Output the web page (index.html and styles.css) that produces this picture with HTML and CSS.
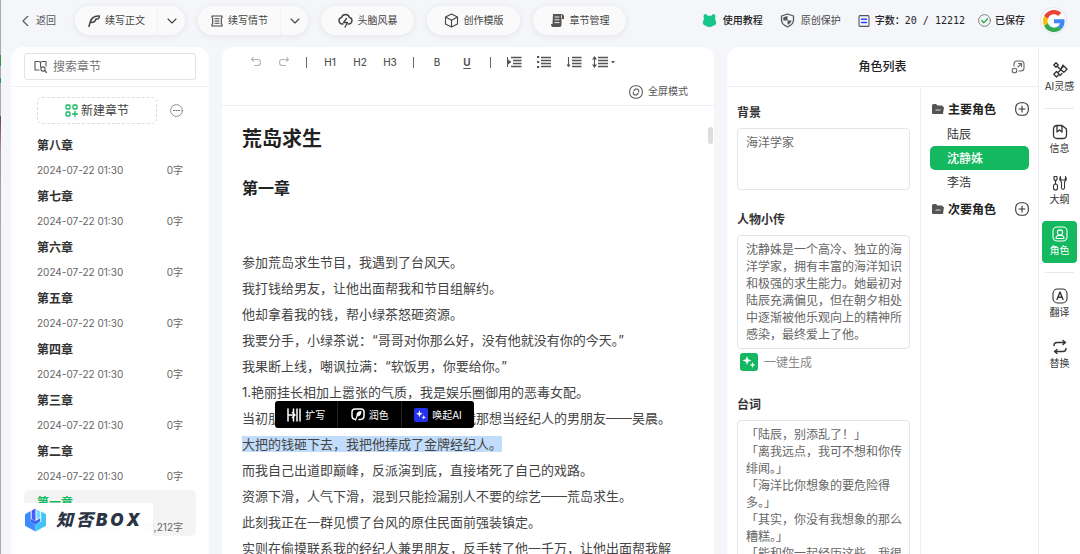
FILE: index.html
```html
<!DOCTYPE html>
<html lang="zh-CN">
<head>
<meta charset="utf-8">
<meta name="viewport" content="width=device-width, initial-scale=1">
<title>荒岛求生 - 写作</title>
<link rel="stylesheet" href="styles.css">
</head>
<body>
<svg class="defs" aria-hidden="true">
  <symbol id="chev" viewBox="0 0 10 10"><path d="M1 3l4 4 4-4"/></symbol>
  <symbol id="plus" viewBox="0 0 14 14"><rect x=".7" y=".7" width="12.6" height="12.6" rx="5"/><path d="M7 4v6M4 7h6"/></symbol>
  <symbol id="folder" viewBox="0 0 12 12"><path d="M0 2.5Q0 1 1.500 1H4l1.500 1.500H10Q11 2.500 11 4h1l-1 7H1Q0 11 0 10z" fill="#555" stroke="none"/><path d="M4 7h4" stroke="#ddd"/></symbol>
  <symbol id="spark" viewBox="0 0 18 18"><path d="M7 3l1.200 3.300L11.500 7.500 8.200 8.700 7 12 5.800 8.700 2.500 7.500 5.800 6.300zM12.500 9l.8 2.200 2.200.8-2.200.8-.8 2.200-.8-2.200-2.200-.8 2.200-.8z" fill="#fff" stroke="none"/></symbol>
</svg>
<div class="edge"></div>
<div class="app">
  <header class="topbar">
    <button class="back"><svg class="i10" viewBox="0 0 10 10"><path d="M7 0L2 5l5 5"/></svg>返回</button>
    <div class="actions">
      <div class="split">
        <button class="pill-main"><svg class="i12" viewBox="0 0 12 12"><path d="M1 11.500C2 7 3 2.500 7 1.500Q9 .8 11.500 1 11.500 3 10 4H8Q7 7.500 3.500 7.500" stroke-width="1.500"/></svg>续写正文</button>
        <button class="pill-drop" aria-label="更多续写正文"><svg class="i10"><use href="#chev"/></svg></button>
      </div>
      <div class="split">
        <button class="pill-main"><svg class="i12" viewBox="0 0 12 12"><path d="M1 1h10v1.500l-.7.8v5.400l.7.8V11H1V9.500l.7-.8V3.300L1 2.500zM4 3.800h4M4 6h4M4 8.200h4"/></svg>续写情节</button>
        <button class="pill-drop" aria-label="更多续写情节"><svg class="i10"><use href="#chev"/></svg></button>
      </div>
      <button class="pill"><svg class="i15" viewBox="0 0 15 15"><path d="M5 11H4Q1 10.500 1 7.500 1 5 3.500 4.500 4.500 1.500 7.500 1.500T11.500 4.500Q14 5 14 7.500 14 10.500 11 11h-1" stroke-width="1.400"/><path d="M8.500 5.500L5.500 9.500h4L7 14" stroke-width="1.300"/></svg>头脑风暴</button>
      <button class="pill"><svg class="i15" viewBox="0 0 15 15"><path d="M7.500 1L13.500 4v7l-6 3-6-3V4zM1.500 4l6 3.200L13.500 4M7.500 7.200V14"/></svg>创作模版</button>
      <button class="pill"><svg class="i15" viewBox="0 0 15 15"><path d="M3 1h8Q14 1 14 3.500V6h-2.500v6Q11.500 14 9.500 14H3Q1 14 1 11h1.500z" fill="#555" stroke="none"/><path d="M5 4h4M5 6.800h4M5 9.600h4" stroke="#fff" stroke-width=".9"/><path d="M11.500 2.500V5" stroke="#fff" stroke-width=".8"/></svg>章节管理</button>
    </div>
    <div class="status">
      <a class="stat strong" href="#"><svg class="i15" viewBox="0 0 15 15"><path d="M3.300 1Q5 1 5.500 2.700h4Q10 1 11.700 1T13.500 3.500L13 6l1 2.500Q15 12 11 12.800 10 14 7.500 14T4 12.800Q0 12 1 8.500L2 6 1.500 3.500Q1.500 1 3.300 1z" fill="#17c58b" stroke="none"/></svg>使用教程</a>
      <a class="stat" href="#"><svg class="i15" viewBox="0 0 15 15"><path d="M7.500 1L13.500 3v4q0 4.500-6 7-6-2.500-6-7V3z" stroke-width="1.300"/><path d="M7.500 3v4.500h4.300q-.6 2.700-4.300 4.500V7.500H3.300V4.200z" fill="#555" stroke="none"/></svg>原创保护</a>
      <span class="stat strong count"><svg class="i12" viewBox="0 0 12 12"><rect x="1" y=".6" width="10" height="10.800" rx="1"/><path d="M3.500 4.300h5M3.500 7.500h5" stroke="#2a49f5" stroke-width="1.500"/></svg>字数：20 / 12212</span>
      <span class="stat strong saved"><svg class="i13" viewBox="0 0 13 13"><circle cx="6.500" cy="6.500" r="5.900" stroke="#777" stroke-width=".9"/><path d="M3.700 6.500l2.100 2.200 3.700-4" stroke="#2fae4c" stroke-width="1.400"/></svg>已保存</span>
      <a class="avatar" href="#" aria-label="账户"><svg viewBox="0 0 48 48"><path fill="#EA4335" d="M24 9.500c3.540 0 6.710 1.220 9.210 3.600l6.850-6.850C35.900 2.380 30.470 0 24 0 14.620 0 6.510 5.380 2.560 13.220l7.980 6.190C12.430 13.720 17.740 9.500 24 9.500z"/><path fill="#4285F4" d="M46.980 24.550c0-1.570-.15-3.090-.38-4.550H24v9.020h12.940c-.58 2.960-2.260 5.480-4.780 7.180l7.730 6c4.510-4.180 7.090-10.360 7.090-17.650z"/><path fill="#FBBC05" d="M10.530 28.590A14.500 14.500 0 0 1 10.530 19.410l-7.980-6.190A24 24 0 0 0 2.560 34.780z"/><path fill="#34A853" d="M24 48c6.480 0 11.930-2.130 15.890-5.810l-7.730-6c-2.150 1.450-4.920 2.300-8.160 2.300-6.260 0-11.570-4.220-13.470-9.910l-7.980 6.190C6.510 42.620 14.620 48 24 48z"/></svg></a>
    </div>
  </header>

  <main class="columns">
    <aside class="panel chapters">
      <div class="search-row">
        <label class="search"><svg class="i13" viewBox="0 0 13 13"><path d="M5 10H1V1.500h3.500Q6.500 1.500 6.500 3q0-1.500 2-1.500H12V6M6.500 3v4"/><circle cx="9" cy="9" r="2.100"/><path d="M10.500 10.500L12.500 12.500"/></svg><input type="text" placeholder="搜索章节" aria-label="搜索章节"></label>
      </div>
      <div class="new-row">
        <button class="new"><svg class="i13" viewBox="0 0 13 13"><rect x="1" y="1" width="4" height="4" rx="1"/><rect x="8" y="1" width="4" height="4" rx="1"/><rect x="1" y="8" width="4" height="4" rx="1"/><path d="M10 7.500v5M7.500 10h5"/></svg>新建章节</button>
        <button class="more" aria-label="更多"><svg class="i13" viewBox="0 0 13 13"><circle cx="6.500" cy="6.500" r="5.900" stroke-width=".8"/><path d="M3.500 6.500h1.200M6 6.500h1.200M8.500 6.500h1.200"/></svg></button>
      </div>
      <ul class="list">
        <li><h3>第八章</h3><p><span>2024-07-22 01:30</span><span>0字</span></p></li>
        <li><h3>第七章</h3><p><span>2024-07-22 01:30</span><span>0字</span></p></li>
        <li><h3>第六章</h3><p><span>2024-07-22 01:30</span><span>0字</span></p></li>
        <li><h3>第五章</h3><p><span>2024-07-22 01:30</span><span>0字</span></p></li>
        <li><h3>第四章</h3><p><span>2024-07-22 01:30</span><span>0字</span></p></li>
        <li><h3>第三章</h3><p><span>2024-07-22 01:30</span><span>0字</span></p></li>
        <li><h3>第二章</h3><p><span>2024-07-22 01:30</span><span>0字</span></p></li>
        <li class="current"><h3>第一章</h3><p><span>2024-07-22 01:31</span><span>12,212字</span></p>
          <div class="brand"><svg viewBox="0 0 22 24"><path d="M0 6l6-3.500V14l5 3v7L0 18z" fill="#3d8bff"/><path d="M7 2l4-2v13l-4-2z" fill="#4a5cf5"/><path d="M11 24v-7l6-3.500V3l5 3v12z" fill="#41c4fa"/><path d="M11 13l5-3v3.500L11 17l-5-3v-3z" fill="#3468f5"/><path d="M12 1l4 2v6l-4 2.500z" fill="#6fdcff"/></svg><b>知</b><b>否</b><b>B</b><b>O</b><b>X</b></div>
        </li>
      </ul>
    </aside>

    <section class="panel editor">
      <div class="tools">
        <div class="toolbar">
          <button class="faint" aria-label="撤销"><svg class="i12" viewBox="0 0 12 12"><path d="M3.500 1L1.500 3.500l2.500 2M1.500 3.500H8Q10.500 3.500 10.500 6.500T8 9.500H4"/></svg></button>
          <button class="faint" aria-label="重做"><svg class="i12" viewBox="0 0 12 12"><path d="M8.500 1l2 2.500-2.500 2M10.500 3.500H4Q1.500 3.500 1.500 6.500T4 9.500h4"/></svg></button>
          <i></i>
          <button>H1</button><button>H2</button><button>H3</button>
          <i></i>
          <button>B</button><button class="under">U</button>
          <i></i>
          <button aria-label="缩进"><svg class="i16" viewBox="0 0 16 16"><path d="M1.500 3v10" stroke-width="1"/><path d="M5 3.500h10.500M7 6.500h8.500M7 9.500h8.500M5 12.500h10.500" stroke-width="1.700"/><path d="M2 5.500L5.500 8 2 10.500z" fill="#555" stroke="none"/></svg></button>
          <button aria-label="列表"><svg class="i16" viewBox="0 0 16 16"><path d="M1 3h2.200M1 8h2.200M1 13h2.200" stroke-width="2.200"/><path d="M5 3.500h10M5 6.500h10M5 9.500h10M5 12.500h10" stroke-width="1.500"/></svg></button>
          <button aria-label="降序"><svg class="i16" viewBox="0 0 16 16"><path d="M2.500 3v9M1 10.500l1.500 2 1.500-2"/><path d="M6 3.500h9.500M6 6.500h9.500M6 9.500h9.500M6 12.500h9.500" stroke-width="1.600"/></svg></button>
          <button class="wide" aria-label="行距"><svg class="i16" viewBox="0 0 16 16"><path d="M2.500 3v10"/><path d="M0 5.500L2.500 2 5 5.500zM0 10.500L2.500 14 5 10.500z" fill="#555" stroke="none"/><path d="M6 3.500h10M6 6.500h10M6 9.500h10M6 12.500h10" stroke-width="1.700"/></svg><svg class="caret" viewBox="0 0 6 6"><path d="M1 2h4L3 4.500z" fill="#555" stroke="none"/></svg></button>
        </div>
        <button class="full"><svg class="i14" viewBox="0 0 14 14"><rect x=".7" y=".7" width="12.600" height="12.600" rx="5.500"/><path d="M7 4Q9.800 3.500 9.800 7M7 10Q4.200 10.500 4.200 7M5 5.500L6.500 4M9 8.500L7.500 10"/></svg>全屏模式</button>
      </div>
      <div class="thumb"></div>
      <article class="doc">
        <h1>荒岛求生</h1>
        <h2>第一章</h2>
        <p>参加荒岛求生节目，我遇到了台风天。</p>
        <p>我打钱给男友，让他出面帮我和节目组解约。</p>
        <p>他却拿着我的钱，帮小绿茶怒砸资源。</p>
        <p>我要分手，小绿茶说：“哥哥对你那么好，没有他就没有你的今天。”</p>
        <p>我果断上线，嘲讽拉满：“软饭男，你要给你。”</p>
        <p>1.艳丽挂长相加上嚣张的气质，我是娱乐圈御用的恶毒女配。</p>
        <p>当初朋友劝我签下新人练手，我签下了我那想当经纪人的男朋友——吴晨。</p>
        <p class="sel"><mark>大把的钱砸下去，我把他捧成了金牌经纪人。</mark>
          <span class="popup"><button><svg class="i14" viewBox="0 0 14 14"><path d="M1 1v12M10 1v12M13 1v12M6.500 1v4M6.500 9v4M1 7h7M5.500 4.500L8 7 5.500 9.500" stroke-width="1.500"/></svg>扩写</button><button><svg class="i14" viewBox="0 0 14 14"><path d="M4.500 11.500Q1 11 1 8V4Q1 1 4 1h6q3 0 3 3v4q0 3-3.500 3.500H8" stroke-width="1.500"/><path d="M10 3.500Q5.500 4 6 8q3.500 0 4-4.500zM6 8L4.500 12" fill="#fff"/></svg>润色</button><button><svg class="i14 ai"><use href="#spark"/></svg>唤起AI</button></span>
        </p>
        <p>而我自己出道即巅峰，反派演到底，直接堵死了自己的戏路。</p>
        <p>资源下滑，人气下滑，混到只能捡漏别人不要的综艺——荒岛求生。</p>
        <p>此刻我正在一群见惯了台风的原住民面前强装镇定。</p>
        <p>实则在偷摸联系我的经纪人兼男朋友，反手转了他一千万，让他出面帮我解</p>
      </article>
    </section>

    <section class="panel roles">
      <div class="role-main">
        <div class="role-head"><h2>角色列表</h2><button aria-label="展开"><svg class="i14" viewBox="0 0 14 14"><path d="M3 6V4Q3 1 6 1h4q3 0 3 3v4q0 3-3 3H8M7 7l3.500-3.500M7.500 3.500h3v3"/><circle cx="3.500" cy="10.500" r="2.300"/></svg></button></div>
        <div class="role-body">
          <form class="form">
            <label for="bg">背景</label>
            <textarea id="bg" class="t-bg">海洋学家</textarea>
            <label for="bio">人物小传</label>
            <textarea id="bio" class="t-bio">沈静姝是一个高冷、独立的海洋学家，拥有丰富的海洋知识和极强的求生能力。她最初对陆辰充满偏见，但在朝夕相处中逐渐被他乐观向上的精神所感染，最终爱上了他。</textarea>
            <button type="button" class="gen"><svg><use href="#spark"/></svg>一键生成</button>
            <label for="lines">台词</label>
            <textarea id="lines" class="t-lines">「陆辰，别添乱了！」
「离我远点，我可不想和你传绯闻。」
「海洋比你想象的要危险得多。」
「其实，你没有我想象的那么糟糕。」
「能和你一起经历这些，我很</textarea>
          </form>
          <div class="cast">
            <div class="group"><svg class="i12"><use href="#folder"/></svg><h3>主要角色</h3><button aria-label="添加主要角色"><svg class="i14"><use href="#plus"/></svg></button></div>
            <button class="person">陆辰</button>
            <button class="person on">沈静姝</button>
            <button class="person">李浩</button>
            <div class="group"><svg class="i12"><use href="#folder"/></svg><h3>次要角色</h3><button aria-label="添加次要角色"><svg class="i14"><use href="#plus"/></svg></button></div>
          </div>
        </div>
      </div>
      <nav class="rail">
        <button><svg class="i16" viewBox="0 0 16 16"><path d="M4 .8L6.200 3 4 5.200 1.800 3zM11.800 4L15 7.200l-3.200 3.200-3.200-3.200zM4.500 9.500L7.200 12.200 4.500 15 1.800 12.200zM5.500 4.500l4 4M9.500 5.500L11 3M6 10.500l2.500-2.500M8 13.500l2-2" stroke-width="1.300"/></svg>AI灵感</button>
        <hr>
        <button><svg class="i16" viewBox="0 0 16 16"><path d="M5 1.500h5L14.500 5v6q0 3.500-3.500 3.500H5Q1.500 14.500 1.500 11V5Q1.500 1.500 5 1.500zM5 2v6l2.500-2L10 8V2" stroke-width="1.300"/></svg>信息</button>
        <button><svg class="i16" viewBox="0 0 16 16"><path d="M2 1.500h3v3L3.500 6v3M2 1.500v3L3.500 6"/><rect x="1.500" y="9" width="4" height="6" rx="2"/><path d="M8.500 1.500Q6.500 5 9.500 7v6q1.500 3 3 0V7q3-2 1-5.500V4l-1 1h-3l-1-1z"/></svg>大纲</button>
        <button class="on"><svg class="i16" viewBox="0 0 16 16"><rect x="1" y="1" width="14" height="14" rx="4"/><circle cx="8" cy="6.500" r="2.600"/><path d="M4 12.500Q4 9.300 8 9.300t4 3.200z"/></svg>角色</button>
        <hr>
        <button><svg class="i16" viewBox="0 0 16 16"><rect x="1" y="1" width="14" height="14" rx="4.500"/><path d="M5 11.500L8 4l3 7.500M6 9.200h4" stroke-width="1.400"/></svg>翻译</button>
        <button><svg class="i16" viewBox="0 0 16 16"><path d="M2 6.500Q2 3.500 5 3.500h8M11 1.500l2.500 2L11 5.500M14 9.500q0 3-3 3H3M5 10.500l-2.500 2L5 14.500" stroke-width="1.400"/></svg>替换</button>
      </nav>
    </section>
  </main>
</div>
</body>
</html>
```
FILE: styles.css
```css
* { box-sizing: border-box; margin: 0; padding: 0; }
body {
  height: 100vh; overflow: hidden; display: flex;
  background: #f5f6fa; color: #333;
  font: 12px/17px Inter, "Noto Sans CJK SC", sans-serif;
}
button, input, textarea { font: inherit; color: inherit; border: 0; background: none; outline: 0; }
button { display: flex; align-items: center; white-space: nowrap; }
a { color: inherit; text-decoration: none; }
ul { list-style: none; }
svg { flex: none; fill: none; stroke: currentColor; stroke-width: 1.1; stroke-linecap: round; stroke-linejoin: round; }
.defs { position: absolute; width: 0; height: 0; }
.i10 { width: 10px; height: 10px; }
.i12 { width: 12px; height: 12px; }
.i13 { width: 13px; height: 13px; }
.i14 { width: 14px; height: 14px; }
.i15 { width: 15px; height: 15px; }
.i16 { width: 16px; height: 16px; }

.edge {
  width: 1px;
  background: linear-gradient(#aaa 10%, #2f9350 10%, #2f9350 12%, #aaa 12%, #aaa 14%, #2f9350 14%, #2f9350 15%, #aaa 15%, #aaa 21%, #70424c 21%, #a98f94 27%, #aaa 40%, #aaa);
}
.app { flex: 1; min-width: 0; display: flex; flex-direction: column; }

.topbar { height: 47px; flex: none; display: flex; align-items: flex-start; padding: 6px 13px 0 20px; font-size: 10px; color: #444; }
.back { height: 29px; gap: 5px; color: #555; width: 54px; }
.actions { display: flex; gap: 13px; }
.split, .pill { height: 29px; border-radius: 15px; background: #fafafa; box-shadow: 0 1px 7px #00000014; }
.split { display: flex; width: 110px; }
.pill-main { flex: 1; gap: 5px; padding-left: 13px; }
.pill-drop { width: 28px; justify-content: center; border-left: 1px solid #f1f1f3; }
.pill { width: 93px; justify-content: center; gap: 5px; }
.status { margin-left: auto; display: flex; align-items: center; height: 29px; }
.stat { display: flex; align-items: center; gap: 6px; margin-right: 17px; white-space: nowrap; }
.stat svg { color: #555; }
.strong { color: #222; font-weight: 500; }
.count { font-family: "DejaVu Sans Mono", "Noto Sans CJK SC", monospace; gap: 5px; margin-right: 13px; }
.saved { gap: 4px; margin-right: 15px; }
.avatar { width: 27px; height: 27px; border: 1px solid #e4e5ea; border-radius: 50%; display: grid; place-items: center; background: #f9fafc; }
.avatar svg { width: 22px; height: 22px; stroke: none; }

.columns { flex: 1; min-height: 0; display: flex; gap: 13px; padding-left: 10px; }
.panel { background: #fff; border-radius: 12px 12px 0 0; overflow: hidden; }

.chapters { width: 198px; flex: none; }
.search-row { padding: 6px 13px; border-bottom: 1px solid #efeff2; }
.search { display: flex; align-items: center; gap: 6px; height: 27px; padding: 0 9px; border: 1px solid #e2e3e8; border-radius: 3px; color: #555; }
.search input { flex: 1; min-width: 0; }
.search input::placeholder { color: #757575; opacity: 1; }
.new-row { display: flex; align-items: center; justify-content: space-between; padding: 10px 26px 0; }
.new { width: 120px; height: 27px; justify-content: center; gap: 3px; border: 1px dashed #ddd; border-radius: 5px; color: #444; }
.new svg { color: #14b85f; stroke-width: 1.3; }
.more { color: #777; }
.list { padding: 9px 13px 0; }
.list li { height: 51px; padding: 4px 13px 0; }
.list h3 { font-size: 12px; line-height: 17px; font-weight: 600; color: #333; }
.list p { display: flex; justify-content: space-between; padding-top: 8px; font-size: 10px; color: #666; }
.list .current { position: relative; height: 46px; background: #f4f4f4; border-radius: 5px; }
.current h3 { color: #14b85f; }
.brand { position: absolute; left: 0; bottom: 0; width: 129px; height: 33px; padding-left: 1px; display: flex; align-items: center; gap: 3px; background: #fffffff5; color: #2b3445; font-size: 17px; line-height: 24px; font-style: italic; }
.brand svg { width: 21px; height: 24px; stroke: none; margin-right: 7px; }
.brand b { font-weight: 900; }

.editor { flex: 1; min-width: 0; position: relative; }
.tools { height: 59px; border-bottom: 1px solid #eeeef1; color: #555; }
.toolbar { display: flex; align-items: center; height: 30px; padding-left: 20px; font-size: 10px; font-weight: 500; }
.toolbar button { width: 30px; justify-content: center; }
.toolbar button.faint { width: 28px; color: #b5b5b5; }
.toolbar i { width: 1px; height: 11px; background: #666; margin: 0 8px; }
.toolbar .under { font-weight: 700; text-decoration: underline; text-underline-offset: 2px; }
.toolbar .wide { gap: 2px; }
.toolbar svg { stroke-linecap: butt; }
.caret { width: 6px; height: 6px; }
.full { margin-left: auto; padding: 6px 26px 0 0; gap: 5px; font-size: 10px; color: #555; }
.thumb { position: absolute; right: 1px; top: 80px; width: 5px; height: 17px; border-radius: 3px; background: #ddd; }
.doc { padding: 17px 0 0 20px; color: #444; font-size: 13px; }
.doc h1 { font-size: 20px; line-height: 32px; font-weight: 600; color: #222; }
.doc h2 { font-size: 16px; line-height: 26px; font-weight: 600; color: #222; margin: 20px 0 48px; }
.doc p { line-height: 26px; white-space: nowrap; }
.doc .sel { position: relative; }
.doc mark { background: #c2dcfb; color: inherit; }
.popup { position: absolute; left: 33px; bottom: 29px; width: 199px; height: 27px; display: flex; background: #000; border-radius: 3px; color: #fff; font-size: 10px; }
.popup button { flex: 1 0 auto; justify-content: center; gap: 4px; padding: 0 10px; }
.popup button + button { border-left: 1px solid #222; }
.ai { background: #2432ef; border-radius: 2px; }

.roles { width: 353px; flex: none; display: flex; border-radius: 12px 0 0 0; }
.role-main { flex: 1; display: flex; flex-direction: column; border-right: 1px solid #efeff2; }
.role-head { height: 40px; flex: none; display: grid; grid-template-columns: 1fr auto 1fr; align-items: center; border-bottom: 1px solid #efeff2; }
.role-head h2 { grid-column: 2; font-size: 12px; font-weight: 500; color: #222; }
.role-head button { justify-self: end; margin-right: 13px; color: #666; }
.role-body { flex: 1; min-height: 0; display: flex; }
.form { flex: 1; padding: 17px 10px 0; display: flex; flex-direction: column; }
.form label { font-weight: 600; color: #333; margin-bottom: 7px; }
.form textarea { display: block; width: 100%; flex: none; padding: 5px 0 0 8px; resize: none; overflow: hidden; border: 1px solid #e4e5ec; border-radius: 4px; color: #666; }
.form .t-bg { height: 62px; margin-bottom: 21px; }
.form .t-bio { height: 114px; }
.form .t-lines { height: 160px; }
.gen { gap: 6px; color: #888; padding: 4px 3px 0; margin-bottom: 25px; }
.gen svg { width: 18px; height: 18px; background: #14b85f; border-radius: 3px; }
.cast { width: 118px; flex: none; border-left: 1px solid #efeff2; padding: 9px 9px 0; }
.group { display: flex; align-items: center; gap: 4px; height: 26px; padding-left: 2px; }
.group h3 { font-size: 12px; font-weight: 600; color: #222; }
.group button { margin-left: auto; }
.person { width: 100%; height: 24px; padding-left: 17px; border-radius: 5px; color: #333; }
.person.on { background: #14b85f; color: #fff; font-weight: 500; }
.person + .group { margin-top: 2px; }
.rail { width: 41px; flex: none; padding: 10px 3px; display: flex; flex-direction: column; gap: 9px; }
.rail button { height: 42px; flex-direction: column; justify-content: center; gap: 1px; font-size: 10px; line-height: 15px; border-radius: 4px; }
.rail button.on { background: #14b85f; color: #fff; }
.rail hr { border: 0; height: 1px; background: #e8e8ec; margin: 0 3px 1px; }
```
